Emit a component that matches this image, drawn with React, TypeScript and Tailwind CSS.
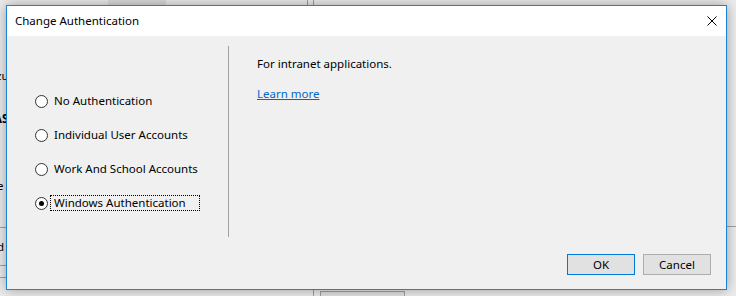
const FONT = "font-['Segoe_UI','Noto_Sans','Liberation_Sans',sans-serif]";

const OPTIONS = [
  "No Authentication",
  "Individual User Accounts",
  "Work And School Accounts",
  "Windows Authentication",
];

function Radio({ label, checked }: { label: string; checked?: boolean }) {
  return (
    <div className="flex h-[34px] items-center">
      <span className="flex h-[13px] w-[13px] items-center justify-center rounded-full border border-[#333333] bg-white">
        {checked && <span className="h-[5px] w-[5px] rounded-full bg-black" />}
      </span>
      <span
        className={`ml-[2px] border px-[3px] leading-[14px] text-black ${
          checked ? "w-[150px] border-dotted border-black" : "border-transparent"
        }`}
      >
        {label}
      </span>
    </div>
  );
}

export default function App() {
  return (
    <div className={`relative h-[296px] w-[736px] overflow-hidden bg-[#ececec] text-[11.5px] ${FONT}`}>
      {/* Window behind the dialog */}
      <div className="absolute left-[108px] top-0 h-[5px] w-[58px] bg-[#dcdcdc]" />
      <div className="absolute left-[307px] top-0 h-[5px] w-px bg-[#a0a0a0]" />
      <div className="absolute left-[313px] top-0 h-[296px] w-px bg-[#a0a0a0]" />
      <div className="absolute left-[320px] top-[291px] h-[10px] w-[85px] border border-[#a0a0a0] bg-[#e1e1e1]" />
      <div className="absolute left-0 top-[227px] h-px w-[6px] bg-[#a0a0a0]" />
      <div className="absolute left-0 top-[265px] h-px w-[6px] bg-[#a0a0a0]" />
      <div className="absolute left-0 top-[277px] h-px w-[6px] bg-[#a0a0a0]" />
      <div className="absolute left-[726px] top-[226px] h-px w-[10px] bg-[#a0a0a0]" />
      <span className="absolute left-[-4px] top-[67px] text-black">zu</span>
      <span className="absolute left-[-6px] top-[110px] font-bold text-black">AS</span>
      <span className="absolute left-[-3px] top-[177px] text-black">e</span>
      <span className="absolute left-[-3px] top-[238px] text-black">d</span>

      {/* Dialog */}
      <div className="absolute left-[6px] top-[5px] flex h-[285px] w-[721px] flex-col border border-[#1883d7] bg-[#f0f0f0] shadow-[0_0_12px_rgba(0,0,0,0.35)]">
        <div className="flex h-[30px] items-center justify-between bg-white pl-[8px] pr-[9px]">
          <span className="text-black">Change Authentication</span>
          <svg width="10" height="10" viewBox="0 0 10 10" className="mb-px">
            <path d="M0.5 0.5 L9.5 9.5 M9.5 0.5 L0.5 9.5" stroke="#000" strokeWidth="1" />
          </svg>
        </div>

        <div className="flex">
          <div className="flex w-[221px] flex-col pl-[28px] pt-[48px]">
            {OPTIONS.map((o, i) => (
              <Radio key={o} label={o} checked={i === 3} />
            ))}
          </div>
          <div className="mt-[10px] h-[191px] w-px bg-[#a0a0a0]" />
          <div className="flex flex-col pl-[28px] pt-[20px]">
            <span className="leading-[16px] text-black">For intranet applications.</span>
            <a className="mt-[14px] leading-[16px] text-[#0066cc] underline">Learn more</a>
          </div>
        </div>

        <div className="mt-auto flex justify-end gap-[8px] pb-[14px] pr-[15px]">
          <button className="h-[21px] w-[68px] border border-[#0078d7] bg-[#e1e1e1] text-black">OK</button>
          <button className="h-[21px] w-[68px] border border-[#adadad] bg-[#e1e1e1] text-black">Cancel</button>
        </div>
      </div>
    </div>
  );
}
